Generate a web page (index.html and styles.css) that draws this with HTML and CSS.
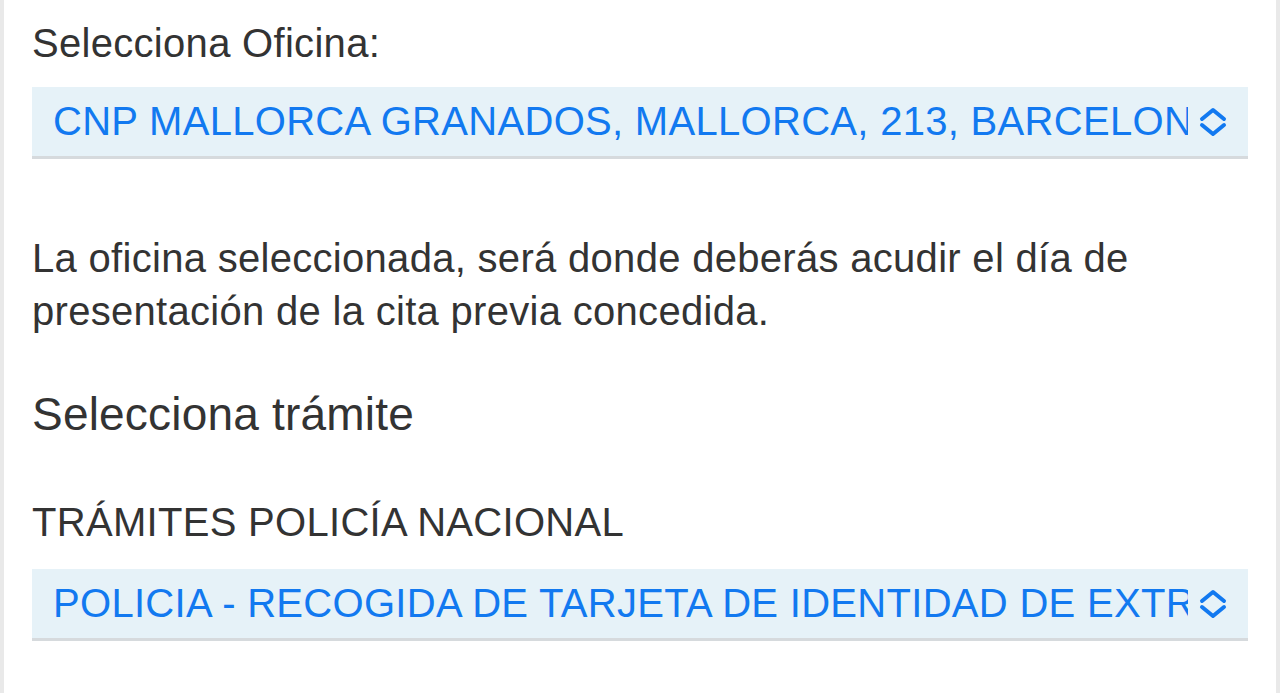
FILE: index.html
```html
<!DOCTYPE html>
<html lang="es">
<head>
    <meta charset="UTF-8">
    <meta name="viewport" content="width=device-width, initial-scale=1.0">
    <title>Cita previa</title>
    <link rel="stylesheet" href="styles.css">
</head>
<body>

<div class="page">
    <label class="field-label">Selecciona Oficina:</label>
    <div class="select-box">
        <span class="select-text">CNP MALLORCA GRANADOS, MALLORCA, 213, BARCELONA</span>
        <svg class="chevron" viewBox="0 0 30 32" width="30" height="32">
            <path d="M4 13 L15 4 L26 13 M4 19 L15 28 L26 19" fill="none" stroke="#1279f0" stroke-width="4" stroke-linecap="round" stroke-linejoin="round"/>
        </svg>
    </div>

    <p class="note">La oficina seleccionada, será donde deberás acudir el día de presentación de la cita previa concedida.</p>

    <h3 class="section-title">Selecciona trámite</h3>

    <label class="field-label group-label">TRÁMITES POLICÍA NACIONAL</label>
    <div class="select-box select-box-last">
        <span class="select-text">POLICIA - RECOGIDA DE TARJETA DE IDENTIDAD DE EXTRANJERO (TIE)</span>
        <svg class="chevron" viewBox="0 0 30 32" width="30" height="32">
            <path d="M4 13 L15 4 L26 13 M4 19 L15 28 L26 19" fill="none" stroke="#1279f0" stroke-width="4" stroke-linecap="round" stroke-linejoin="round"/>
        </svg>
    </div>
</div>

</body>
</html>
```

FILE: styles.css
```css
* {
    margin: 0;
    padding: 0;
    box-sizing: border-box;
    font-family: "Liberation Sans", Arial, sans-serif;
}

body {
    background: #ffffff;
    height: 693px;
    overflow: hidden;
}

.page {
    height: 100%;
    border-left: 4px solid #e9e9e9;
    border-right: 4px solid #e9e9e9;
    padding: 20px 28px 0 28px;
    color: #333333;
}

.field-label {
    display: block;
    font-size: 40px;
    line-height: 46px;
    letter-spacing: 0.3px;
    color: #333333;
}

.select-box {
    display: flex;
    align-items: center;
    margin-top: 21px;
    height: 72px;
    background: #e6f2f8;
    border-bottom: 3px solid #d6dadd;
    padding: 0 20px 0 21px;
}

.select-box-last {
    margin-top: 24px;
}

.select-text {
    flex: 1;
    white-space: nowrap;
    overflow: hidden;
    font-size: 40px;
    letter-spacing: 0.3px;
    color: #1279f0;
    margin-right: 10px;
}

.chevron {
    flex: none;
}

.note {
    margin-top: 73px;
    font-size: 40px;
    line-height: 53px;
    letter-spacing: 0.3px;
}

.section-title {
    margin-top: 48px;
    font-size: 46px;
    font-weight: normal;
    line-height: 56px;
    letter-spacing: 0.2px;
}

.group-label {
    margin-top: 57px;
}
```
